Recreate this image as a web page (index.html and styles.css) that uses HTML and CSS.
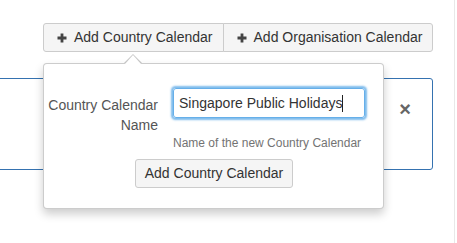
FILE: index.html
```html
<!DOCTYPE html>
<html>
<head>
<meta charset="utf-8">
<link rel="stylesheet" href="styles.css">
</head>
<body>
<div class="main">
  <div class="toolbar">
    <div class="btn-group">
      <button class="btn btn-tool"><svg class="plus" width="10" height="10" viewBox="0 0 10 10"><path d="M5 0.5V9.5M0.5 5H9.5" stroke="#444" stroke-width="2.8"/></svg>Add Country Calendar</button>
      <button class="btn btn-tool"><svg class="plus" width="10" height="10" viewBox="0 0 10 10"><path d="M5 0.5V9.5M0.5 5H9.5" stroke="#444" stroke-width="2.8"/></svg>Add Organisation Calendar</button>
    </div>
  </div>
  <div class="panel">
    <span class="close">×</span>
  </div>
  <div class="popover">
    <div class="arrow"></div>
    <form class="form">
      <label class="label">Country Calendar Name</label>
      <div class="field">
        <div class="input">Singapore Public Holidays<span class="caret"></span></div>
        <div class="help">Name of the new Country Calendar</div>
      </div>
      <div class="actions">
        <button type="button" class="btn btn-submit">Add Country Calendar</button>
      </div>
    </form>
  </div>
</div>
</body>
</html>
```
FILE: styles.css
```css
html, body {
  margin: 0;
  padding: 0;
  background: #fff;
  overflow: hidden;
}
body {
  font-family: "Liberation Sans", Arial, sans-serif;
  font-size: 14px;
  color: #333;
}
.main {
  position: relative;
  width: 454px;
  height: 243px;
  border-right: 1px solid #e8e8e8;
}
.toolbar {
  padding: 23px 0 0 43px;
}
.btn-group {
  display: flex;
}
.btn {
  font-family: inherit;
  font-size: 14px;
  color: #333;
  background: #f5f5f5;
  border: 1px solid #ccc;
  border-radius: 3px;
  height: 29px;
  line-height: 19px;
  display: flex;
  align-items: center;
  margin: 0;
}
.btn-tool {
  padding: 0 10px 0 13px;
}
.btn-group .btn-tool:first-child {
  border-top-right-radius: 0;
  border-bottom-right-radius: 0;
}
.btn-group .btn-tool + .btn-tool {
  margin-left: -1px;
  border-top-left-radius: 0;
  border-bottom-left-radius: 0;
}
.plus {
  margin-right: 7px;
  flex: none;
}
.panel {
  margin: 26px 0 0 -20px;
  width: 453px;
  height: 92px;
  box-sizing: border-box;
  border: 1px solid #3572b0;
  border-radius: 3px;
  display: flex;
  justify-content: flex-end;
  align-items: flex-start;
  padding: 19px 21px 0 0;
}
.close {
  width: 12px;
  text-align: center;
  font-size: 20px;
  line-height: 22px;
  font-weight: bold;
  color: #666;
}
.popover {
  position: absolute;
  top: 63px;
  left: 43px;
  width: 341px;
  box-sizing: border-box;
  background: #fff;
  border: 1px solid rgba(0, 0, 0, 0.2);
  border-radius: 4px;
  box-shadow: 0 5px 10px rgba(0, 0, 0, 0.2);
}
.arrow {
  position: absolute;
  top: -10px;
  left: 80px;
  width: 0;
  height: 0;
  border-style: solid;
  border-width: 0 9px 9px;
  border-color: transparent transparent rgba(0, 0, 0, 0.22);
}
.arrow::after {
  content: "";
  position: absolute;
  top: 1px;
  left: -8px;
  width: 0;
  height: 0;
  border-style: solid;
  border-width: 0 8px 9px;
  border-color: transparent transparent #fff;
}
.form {
  display: grid;
  grid-template-columns: 114px 192px;
  column-gap: 15px;
  padding: 24px 18px 20px 0;
  margin: 0;
}
.label {
  text-align: right;
  color: #555;
  padding-top: 7px;
  line-height: 20px;
}
.input {
  height: 30px;
  box-sizing: border-box;
  border: 1px solid #66afe9;
  border-radius: 3px;
  padding: 0 5px;
  line-height: 28px;
  color: #333;
  box-shadow: 0 0 2px 1.5px rgba(102, 175, 233, 0.85);
  white-space: nowrap;
}
.caret {
  display: inline-block;
  width: 1px;
  height: 17px;
  background: #222;
  vertical-align: -4px;
}
.help {
  margin-top: 17px;
  font-size: 12px;
  line-height: 17px;
  color: #737373;
  white-space: nowrap;
}
.actions {
  grid-column: 1 / -1;
  display: flex;
  justify-content: center;
  padding-left: 19px;
  margin-top: 7px;
}
.btn-submit {
  padding: 0 9px;
}
```
